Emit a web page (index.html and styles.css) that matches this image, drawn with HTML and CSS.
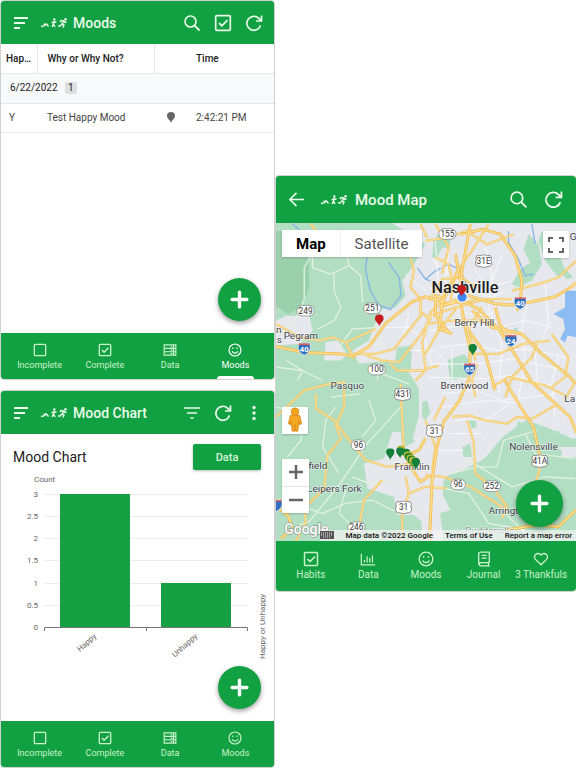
FILE: index.html
```html
<!DOCTYPE html>
<html lang="en">
<head>
<meta charset="utf-8">
<meta name="viewport" content="width=device-width, initial-scale=1">
<title>Moods</title>
<link rel="stylesheet" href="styles.css">
</head>
<body>
<svg class="sprite" aria-hidden="true">
  <symbol id="menu" viewBox="0 0 16 16"><path d="M1 3h14M1 8h11M1 13h6" stroke-width="1.8"/></symbol>
  <symbol id="runners" viewBox="0 0 28 12"><path d="M1 9.500l3-.5 2.500-2 2 2.500M3.500 7.500l3-.5" stroke-width="1.300"/><path d="M14 4l-.5 3-1.500 3M13.500 7l1.500 3M11.500 5.500l5-.5" stroke-width="1.500"/><circle cx="14.300" cy="2.500" r="1.200" fill="currentColor" stroke="none"/><path d="M24 4l-2 3 2 1-1 2.500M22 7l-2 2h-2M20 5l1-1.500 3 .5 1 1.500 1.500-.5" stroke-width="1.400"/><circle cx="25.500" cy="2.300" r="1.200" fill="currentColor" stroke="none"/></symbol>
  <symbol id="search" viewBox="0 0 18 18"><circle cx="7.500" cy="7.500" r="5.500" stroke-width="1.600"/><path d="M11.500 11.500l5 5" stroke-width="1.800"/></symbol>
  <symbol id="check" viewBox="0 0 16 16"><rect x="1.500" y="1.500" width="13" height="13" rx="1" stroke-width="1.500"/><path d="M4.500 8l2.500 2.500 5-5" stroke-width="1.600"/></symbol>
  <symbol id="box" viewBox="0 0 16 16"><rect x="1.500" y="1.500" width="13" height="13" rx="1" stroke-width="1.500"/></symbol>
  <symbol id="refresh" viewBox="0 0 18 18"><path d="M15.500 11.500a7 7 0 1 1-1.700-7.200L16.500 7M16.500 1.500V7H11" stroke-width="1.700"/></symbol>
  <symbol id="filter" viewBox="0 0 18 18"><path d="M1 4h16M4 9h10M7.500 14h3" stroke-width="1.700"/></symbol>
  <symbol id="more" viewBox="0 0 18 18"><g fill="currentColor" stroke="none"><circle cx="9" cy="3.500" r="1.700"/><circle cx="9" cy="9" r="1.700"/><circle cx="9" cy="14.500" r="1.700"/></g></symbol>
  <symbol id="back" viewBox="0 0 18 18"><path d="M17 9H2M9 2L2 9l7 7" stroke-width="1.700"/></symbol>
  <symbol id="server" viewBox="0 0 18 16"><path d="M1.500 1.500h15v13h-15zM1.500 6h15M1.500 10.300h15M9.500 3.800H12M9.500 8.200H12M9.500 12.500H12M13.500 2v12" stroke-width="1.500"/></symbol>
  <symbol id="smile" viewBox="0 0 18 18"><circle cx="9" cy="9" r="7.700" stroke-width="1.500"/><path d="M5.300 10.500c1 3.300 6.400 3.300 7.400 0M6.300 5.700v2M11.700 5.700v2" stroke-width="1.500"/></symbol>
  <symbol id="bars" viewBox="0 0 18 16"><path d="M1.500 2v12.500H17M5 12V9M8 12V5M11 12V7M14 12V4" stroke-width="1.400"/></symbol>
  <symbol id="book" viewBox="0 0 16 18"><path d="M14 13H4a2 2 0 0 0 0 3.800h10.500M2 15V3.200A2 2 0 0 1 4 1.200h10V13M13 13v3.500M5.500 5h5.500M5.500 8h5.500" stroke-width="1.500"/></symbol>
  <symbol id="heart" viewBox="0 0 18 16"><path d="M9 14.500L3 8.700C-1 4.500 5-1 9 3.500 13-1 19 4.500 15 8.700z" stroke-width="1.500"/></symbol>
  <symbol id="plus" viewBox="0 0 18 18"><path d="M9 2v14M2 9h14" stroke-width="3.200" stroke-linecap="round"/></symbol>
  <symbol id="pin" viewBox="0 0 24 33"><path d="M12 33C10 24 0 20 0 11a12 11 0 0 1 24 0c0 9-10 13-12 22z" fill="currentColor" stroke="none"/></symbol>
  <symbol id="interstate" viewBox="0 0 40 42"><path d="M5 3Q12 7 20 3q8 4 15 0 5 9 3 18-4 14-18 19Q6 35 2 21 0 12 5 3z" fill="#2f6fbd" stroke="#fff" stroke-width="2"/><path d="M5 3Q12 7 20 3q8 4 15 0l2 6H3z" fill="#dd5b5b" stroke="none"/></symbol>
  <symbol id="shield" viewBox="0 0 54 42"><path d="M8 3q6 3 11 0 8-2 16 0 5 3 11 0l5 8q-5 5 0 12 2 12-9 14-9 1-15 3-6-2-15-3Q1 35 3 23q5-7 0-12z" fill="#fff" stroke="#777" stroke-width="2.500"/></symbol>
</svg>

<main class="board">
  <div class="column">
    <section class="panel" aria-label="Moods">
      <header class="bar">
        <button class="icon-btn lead" aria-label="Menu"><svg><use href="#menu"/></svg></button>
        <svg class="runners"><use href="#runners"/></svg>
        <h1>Moods</h1>
        <button class="icon-btn" aria-label="Search"><svg><use href="#search"/></svg></button>
        <button class="icon-btn" aria-label="Select"><svg><use href="#check"/></svg></button>
        <button class="icon-btn" aria-label="Refresh"><svg><use href="#refresh"/></svg></button>
      </header>
      <div class="list">
        <table>
          <colgroup><col class="c1"><col class="c2"><col class="c3"><col></colgroup>
          <thead><tr><th class="tight">Hap…</th><th>Why or Why Not?</th><th></th><th class="time">Time</th></tr></thead>
          <tbody>
            <tr class="group"><td colspan="4">6/22/2022 <span class="count">1</span></td></tr>
            <tr><td class="yes">Y</td><td>Test Happy Mood</td><td class="place"><svg><use href="#pin"/></svg></td><td class="time">2:42:21 PM</td></tr>
          </tbody>
        </table>
        <button class="fab" aria-label="Add"><svg><use href="#plus"/></svg></button>
      </div>
      <nav class="tabs">
        <a href="#"><svg><use href="#box"/></svg>Incomplete</a>
        <a href="#"><svg><use href="#check"/></svg>Complete</a>
        <a href="#"><svg><use href="#server"/></svg>Data</a>
        <a href="#" class="active"><svg><use href="#smile"/></svg>Moods</a>
      </nav>
    </section>

    <section class="panel" aria-label="Mood Chart">
      <header class="bar">
        <button class="icon-btn lead" aria-label="Menu"><svg><use href="#menu"/></svg></button>
        <svg class="runners"><use href="#runners"/></svg>
        <h1>Mood Chart</h1>
        <button class="icon-btn" aria-label="Filter"><svg><use href="#filter"/></svg></button>
        <button class="icon-btn" aria-label="Refresh"><svg><use href="#refresh"/></svg></button>
        <button class="icon-btn" aria-label="More"><svg><use href="#more"/></svg></button>
      </header>
      <div class="chart-body">
        <div class="chart-head"><h2>Mood Chart</h2><button class="data-btn">Data</button></div>
        <svg class="chart" viewBox="1 470 273 195" role="img" aria-label="Count by Happy or Unhappy">
          <path class="grid" d="M44 494.500h204M44 516.500h204M44 538.500h204M44 560.500h204M44 583.500h204M44 605.500h204"/>
          <path class="column-bar" d="M60 494h70v133H60zM161 583h70v44h-70z"/>
          <path class="axis" d="M44.500 631v-3.500h203v3.500M146.500 627.500v3.500"/>
          <text x="34" y="482">Count</text>
          <g class="ticks"><text x="38" y="497">3</text><text x="38" y="519">2.5</text><text x="38" y="541">2</text><text x="38" y="563">1.5</text><text x="38" y="586">1</text><text x="38" y="608">0.5</text><text x="38" y="630">0</text>
          <text transform="translate(97 637) rotate(-42)">Happy</text><text transform="translate(198 637) rotate(-42)">Unhappy</text></g>
          <text class="side" transform="translate(265 659) rotate(-90)">Happy or Unhappy</text>
        </svg>
        <button class="fab" aria-label="Add"><svg><use href="#plus"/></svg></button>
      </div>
      <nav class="tabs">
        <a href="#"><svg><use href="#box"/></svg>Incomplete</a>
        <a href="#"><svg><use href="#check"/></svg>Complete</a>
        <a href="#"><svg><use href="#server"/></svg>Data</a>
        <a href="#"><svg><use href="#smile"/></svg>Moods</a>
      </nav>
    </section>
  </div>

  <section class="panel map-panel" aria-label="Mood Map">
    <header class="bar tall">
      <button class="icon-btn lead" aria-label="Back"><svg><use href="#back"/></svg></button>
      <svg class="runners"><use href="#runners"/></svg>
      <h1>Mood Map</h1>
      <button class="icon-btn" aria-label="Search"><svg><use href="#search"/></svg></button>
      <button class="icon-btn" aria-label="Refresh"><svg><use href="#refresh"/></svg></button>
    </header>
    <div class="map">
      <svg class="canvas" viewBox="0 6 903 957" role="img" aria-label="Map of Nashville and Franklin">
        <path d="M0 0h903v970H0z" fill="#b2dec4"/>
        <path d="M0 30h60l40 60 0 110-25 60-40 20-35-25z" fill="#9bd0ad"/>
        <g fill="#e7e8ed">
          <path d="M340 0L450 70l-40 70-30 40 10 45-30 35-40 5-20 40-20 55-50 30 20 40 90-10 60 35 30 50 0 80-18 70 30 40 0 45-20 20v60l50-10 40-40 120-60 50-60 70-50 60 20 80 35h41V0z"/>
          <path d="M0 300l30-15 70 0 10 45-40 40-70 5zM150 365l35-5 30 40-20 20h-50zM265 730l60-15 25-80 25 0 5 50 45-25 60 25 20 85-5 90-15 30-30-10-10 30-30-25-50 0-10-55-80-25zM455 600l65 10 15 130-50 70 20 155h-50z"/>
          <path d="M435 780l50 10 40 80-30 10-20 85h-35zM820 680h83v30l-83 5z"/>
          <path d="M440 560l270 0 0 50-90 110-80 40-100 10z"/>
        </g>
        <g fill="#b2dec4">
          <path d="M500 20l30 20-10 40-20 0-15 30-15 0 5-50zM760 40l30 30 10 60-30 50-40 20-20-10 25-45 30-20-20-40zM800 30l50 60 20 60-20 20-40-50-20-60zM850 120l45 50-20 5-25-30z"/>
          <path d="M515 420l50-20 20 20-10 50-50 10zM365 380l45-5-5 75-50-15zM440 545l15-5 10 35-15 25-10-10zM560 680l25-10 5 40-25 0zM580 600l20 0 5 20-15 5zM640 230l15 0v18h-15zM715 324l12-4v10l-12 4z"/>
          <path d="M725 600l60 35 65-3 18 28-20 25-60-5-60-45zM680 665l60-50 60 40 60 35 0 60-180 10z"/>
        </g>
        <g fill="none" stroke="#85b3e5" stroke-width="4">
          <path d="M274 110l-5 35 15 65 25 42 35 15 32-42-5-55-32-45M50 9l70 60M450 175l30-25 40-20 30 15 20 35 0 35M700 30l0 35 30 50 20 50 25-5M425 140l25 35 15 5M770 9l10 60"/>
        </g>
        <path d="M870 210l33 0v140l-25-5-8 20-15-10 15-30-5-30-30-15 35-20z" fill="#8dbcf2"/>
        <g fill="none" stroke="#e2f2df" stroke-width="4" stroke-linejoin="round">
          <path d="M110 40l10 40-35 60 0 95-25 60-45 40M110 70v70l55 20 55-25 35 30 5 80M175 160l0 50 20 50-20 40-50 25M220 135l-10-60-40-45M310 320l-80 5-40 55M310 320l5 50-10 110M140 480l-60-30-80-10M0 560l40 10 40 40-5 50-40 50M380 555l-110 120-80 120-90 110-30 10M400 490l-80-30 0-50M280 540l20 60-40 50M180 560l-30 40-10 80 50 80M50 850l90 30 70-30 80-10 60 30 80-5M230 770l50 20 80-10M210 810l-20 70 40 40M525 760l80-20 60 0 20-80 100-30M480 800l100 20 60 90 110 20M690 880l60 60M580 720l130 80 100-30 90 5M750 640l30 60 120 15M30 420l50 30-15 30M165 530l90-10"/>
        </g>
        <g fill="none" stroke="#f8f9fb" stroke-width="3">
          <path d="M310 320l90 0 50 40 20 80M400 390l80 0 50 50M460 200l60 30 60-20 70 20 40-20M480 240l100 40 70 0 20-50M460 330l120-20 90 10 80-20 80 20M490 380l90-10 90 20 90-5 130 30M470 430l140 0 100-15 140 30M460 470l160 5 90-10 120 30M500 520l100-10 80 30 160-20M500 560l140-20 100 10M540 600l100-5 70-50M530 380v110M630 80l20 80-10 100 40 110-10 150M680 100l-30 80 10 60M760 230l-20 90 10 100-20 110M810 190l10 120-40 90 10 110M850 400l-20 90 10 100M480 60l10 160M520 80l-10 110M600 150l40 50 70-20M470 120l80 60M390 160l60 50M400 280l-20 90M520 640l100 0M490 690l75 0"/>
        </g>
        <defs>
          <path id="minor" d="M105 9l15 20M0 310l70 40 60 10 40-10 40 15 90-40M210 365l25 50M405 110l10 40-10 50 30 35v50l-80 100-55 15-80 0M430 270l35 25-35 55-60 75-50-5-75-25M345 430l20 20 85 0-30 30M0 590l85-80 75-20 45-5 0 75-25 55 15 40-40 50-10 100-60 60 5 40-25 50-20 30M120 520l0 45 55 35 45 60 50 60 65 20 75-10M375 490l5 110 5 95M320 780l-55 60-15 80-35 25M390 770l10 50-20 60 0 80M400 820l50-20M450 60l65-10 60-20 60 40 80-30M460 240l40-65 60-5 40 30M480 110l40 20 10 50-20 50-45 45-25 90 10 80 40-10M480 9l40 70-20 80M640 9l-50 80-50 70-15 80M450 400l40-70 55-70 60-30M450 290l90-30 90-25 80 0M450 310l80-10 100 0 80 55M590 400l80 0 75-30 80-10M600 530l-10-50 15-50M650 500l50-30 110 25 70 35M790 360l-20 50-60 60-20 60M830 340l50 70-10 60-40 30M710 210l80-20 60-20 53-50M530 590l50-5 50 15 65 10 30-20 45 5 70-40M575 600l20 65 5 95 55 45 40 55-15 35M795 740l-15 55 25 40M450 765l55 5 80 30 110 70M450 800l65 5M475 600l35-70M900 485l-30 50M455 50l-20-40M620 260l-40 60 20 100M450 600l30 80-10 70"/>
          <path id="major" d="M0 378l85 18 115 4 30 8 50-30 50-70 80-65 40-15 70 20 55-25 80 25 55 5 60-10 70-15 50-30 13-13M585 9l-10 55-15 85-5 90 15 85 15 65-5 90-30 65-45 60-20 75-15 100-10 230M560 240l50 25 60 60 45 70 55 90 50 45 65 60 30 70M590 270l60 50 90 20 60 60 85 70 18 20M555 40l70-15 50 15 45 65 20 75-5 70-10 20M660 260l15 55 30 25M580 330l50 70 30 110M690 480l10 20 40 65 35 55 20 90M540 100l15 80M545 165l-35 40-15 60M385 710l45-20 20-35M395 725l40 60 30-20M0 860l35 25 15 40-35 30M690 930l100-15 60 5 53-50M560 240l-60 15-10 70 40 15M500 230l-20-5 0 60 40 50"/>
        </defs>
        <use href="#minor" class="minor-road"/><use href="#minor" class="minor-road core"/>
        <use href="#major" class="main-road"/><use href="#major" class="main-road core"/>
        <g class="city"><text x="0" y="336">n</text><text x="2" y="366">s</text><text x="23" y="355">Pegram</text><text x="164" y="506">Pasquo</text><text x="537" y="316">Berry Hill</text><text x="495" y="505">Brentwood</text><text x="702" y="689">Nolensville</text><text x="640" y="882">Arrington</text><text x="98" y="747">field</text><text x="94" y="817">Leipers Fork</text><text x="357" y="751">Franklin</text><text x="868" y="545">La</text><text x="884" y="57">G</text><text x="570" y="942" class="dim">Rudderville</text></g>
        <text class="capital" x="468" y="217">Nashville</text>
        <g class="route">
          <rect x="63" y="254" width="52" height="32" rx="16"/><rect x="264" y="247" width="52" height="32" rx="16"/><rect x="277" y="431" width="52" height="32" rx="16"/><rect x="490" y="23" width="52" height="32" rx="16"/><rect x="226" y="659" width="44" height="32" rx="16"/><rect x="216" y="906" width="52" height="32" rx="16"/><rect x="526" y="777" width="44" height="32" rx="16"/><rect x="624" y="782" width="52" height="32" rx="16"/>
          <use href="#shield" x="598" y="100" width="54" height="42"/><use href="#shield" x="354" y="501" width="54" height="42"/><use href="#shield" x="357" y="841" width="54" height="42"/><use href="#shield" x="450" y="611" width="54" height="42"/><use href="#shield" x="766" y="702" width="56" height="42"/>
          <text x="89" y="279">249</text><text x="290" y="272">251</text><text x="303" y="456">100</text><text x="516" y="48">155</text><text x="248" y="684">96</text><text x="242" y="931">246</text><text x="548" y="802">96</text><text x="650" y="807">252</text><text x="625" y="130">31E</text><text x="381" y="531">431</text><text x="384" y="871">31</text><text x="477" y="641">31</text><text x="794" y="732">41A</text>
        </g>
        <g class="highway">
          <use href="#interstate" x="65" y="364" width="40" height="42"/><use href="#interstate" x="715" y="226" width="40" height="42"/><use href="#interstate" x="687" y="339" width="40" height="42"/><use href="#interstate" x="563" y="425" width="40" height="42"/><use href="#interstate" x="-20" y="835" width="40" height="42"/>
          <text x="85" y="395">40</text><text x="735" y="257">40</text><text x="707" y="370">24</text><text x="583" y="456">65</text>
        </g>
        <circle cx="560" cy="229" r="17" fill="#fff"/><circle cx="560" cy="229" r="14" fill="#4285f4"/>
        <g color="#c51b1b"><use href="#pin" x="545" y="192" width="28" height="36"/><use href="#pin" x="297" y="281" width="28" height="36"/></g>
        <g color="#158039"><use href="#pin" x="579" y="370" width="26" height="35"/><use href="#pin" x="331" y="684" width="26" height="35"/></g>
        <g color="#b9b936"><use href="#pin" x="364" y="675" width="25" height="33"/><use href="#pin" x="389" y="694" width="25" height="33"/></g>
        <g color="#158039"><use href="#pin" x="361" y="681" width="25" height="33"/><use href="#pin" x="379" y="685" width="25" height="33"/></g>
        <g color="#b9b936"><use href="#pin" x="384" y="693" width="25" height="33"/></g><use href="#pin" x="387" y="698" width="25" height="33" color="#158039"/><use href="#pin" x="392" y="702" width="25" height="33" color="#b9b936"/><use href="#pin" x="396" y="706" width="25" height="33" color="#158039"/><use href="#pin" x="400" y="709" width="25" height="33" color="#b9b936"/>
        <use href="#pin" x="407" y="712" width="27" height="36" color="#158039"/>
        <text class="brand" x="25" y="942">Google</text>
      </svg>
      <div class="map-type"><button class="selected">Map</button><button>Satellite</button></div>
      <button class="control fullscreen" aria-label="Fullscreen"><svg viewBox="0 0 18 18"><path d="M2 6V2h4M12 2h4v4M16 12v4h-4M6 16H2v-4"/></svg></button>
      <button class="control pegman" aria-label="Street View"><svg viewBox="0 0 18 28"><g fill="#f5a623" stroke="#d98a13"><path d="M4 9h10l2 9-2 1-1-4-1 11H9.500L9 19l-.5 7H6L5 15l-1 4-2-1z"/><circle cx="9" cy="5" r="4"/></g></svg></button>
      <div class="zoom"><button aria-label="Zoom in"><svg viewBox="0 0 18 18"><path d="M9 2v14M2 9h14"/></svg></button><button aria-label="Zoom out"><svg viewBox="0 0 18 18"><path d="M2 9h14"/></svg></button></div>
      <div class="legal"><svg class="keyboard" viewBox="0 0 14 8"><path d="M0 0h14v8H0z" fill="#555" stroke="none"/><path d="M1 2h12M1 4h12M3 6h8" stroke="#eee" stroke-dasharray="1 1"/></svg><span>Map data ©2022 Google</span><a href="#">Terms of Use</a><a href="#">Report a map error</a></div>
      <button class="fab" aria-label="Add"><svg><use href="#plus"/></svg></button>
    </div>
    <nav class="tabs tall">
      <a href="#"><svg><use href="#check"/></svg>Habits</a>
      <a href="#"><svg><use href="#bars"/></svg>Data</a>
      <a href="#"><svg><use href="#smile"/></svg>Moods</a>
      <a href="#"><svg><use href="#book"/></svg>Journal</a>
      <a href="#"><svg><use href="#heart"/></svg>3 Thankfuls</a>
    </nav>
  </section>
</main>
</body>
</html>
```
FILE: styles.css
```css
* { box-sizing: border-box; }
body { margin: 0; background: #fff; color: #222; font-family: Roboto, "Liberation Sans", sans-serif; }
button { border: 0; padding: 0; background: none; color: inherit; font: inherit; }
a { color: inherit; text-decoration: none; }
h1, h2 { margin: 0; font-weight: 400; }
svg { display: block; fill: none; stroke: currentColor; }
.sprite { position: absolute; width: 0; height: 0; }

.board { display: grid; grid-template-columns: 275fr 301fr; align-items: start; }
.column { display: grid; gap: 10px; }
.panel { border: 1px solid #d0d0d0; border-radius: 4px; overflow: hidden; }
.map-panel { margin-top: 175px; border-right: 0; }

.bar { display: flex; align-items: center; height: 43px; padding: 0 5px 0 4px; background: #12a142; color: #e9faea; }
.bar h1 { flex: 1; padding-left: 5px; font-size: 14px; font-weight: 500; }
.icon-btn { display: grid; place-items: center; width: 31px; height: 31px; }
.icon-btn svg { width: 18px; height: 18px; }
.icon-btn.lead svg { width: 16px; height: 16px; }
.runners { width: 28px; height: 12px; margin-left: 4px; }
.bar.tall { height: 47px; padding: 0 5px; }
.bar.tall h1 { padding-left: 7px; font-size: 15px; }
.bar.tall .icon-btn { width: 35px; }
.bar.tall .icon-btn svg { width: 19px; height: 19px; }
.bar.tall .lead { width: 31px; }
.bar.tall .lead svg { width: 17px; height: 17px; }
.bar.tall .runners { margin-left: 8px; }

.list { position: relative; min-height: 289px; }
table { width: 100%; border-collapse: collapse; table-layout: fixed; font-size: 10px; }
.c1 { width: 36px; }
.c2 { width: 117px; }
.c3 { width: 33px; }
th, td { height: 29px; padding: 0 10px; border-bottom: 1px solid #e6e6e8; text-align: left; color: #444; white-space: nowrap; }
th { color: #222; font-weight: 500; border-right: 1px solid #e8e8e8; }
th:nth-child(n+3) { border-right: 0; }
th.tight { padding: 0 5px; }
.time { padding: 0 9px; }
.yes { padding: 0 8px; }
.group td { height: 30px; padding: 0 9px; background: #f8f9fb; color: #222; }
.count { display: inline-block; margin-left: 5px; padding: 0 3px; border-radius: 2px; background: #dddfe1; line-height: 12px; }
.place { padding: 0 13px; color: #666; }
.place svg { width: 8px; height: 11px; }

.fab { position: absolute; right: 13px; bottom: 12px; display: grid; place-items: center; width: 43px; height: 43px; border-radius: 50%; background: #12a142; color: #fff; box-shadow: 0 2px 5px #0006; }
.fab svg { width: 19px; height: 19px; }

.tabs { display: flex; height: 46px; padding: 0 6px; background: #12a142; color: #c9f2cb; font-size: 9px; }
.tabs a { position: relative; flex: 1; display: flex; flex-direction: column; align-items: center; gap: 2px; padding-top: 10px; line-height: 12px; white-space: nowrap; }
.tabs svg { width: 14px; height: 14px; }
.tabs .active { color: #fff; }
.tabs .active::after { content: ""; position: absolute; bottom: 0; width: 37px; height: 3px; border-radius: 3px 3px 0 0; background: #fff; }
.tabs.tall { height: 50px; font-size: 10px; }
.tabs.tall svg { width: 16px; height: 16px; }

.chart-body { position: relative; padding-bottom: 56px; }
.chart-head { display: flex; align-items: center; justify-content: space-between; padding: 10px 13px 0 12px; }
.chart-head h2 { font-size: 14px; }
.data-btn { width: 68px; height: 26px; border-radius: 2px; background: #12a142; color: #d9f7dc; font-size: 11px; font-weight: 500; box-shadow: 0 1px 3px #0004; }
.chart { width: 100%; stroke: none; fill: #666; font-size: 8px; }
.grid { stroke: #ececec; }
.column-bar { fill: #15a043; }
.axis { fill: none; stroke: #777; }
.ticks { text-anchor: end; }

.map { position: relative; }
.canvas { width: 100%; height: auto; stroke: none; }
.minor-road { fill: none; stroke: #f3c766; stroke-width: 7; stroke-linejoin: round; }
.main-road { fill: none; stroke: #f2bb50; stroke-width: 9; stroke-linejoin: round; }
.minor-road.core { stroke: #fbe3a2; stroke-width: 3; }
.main-road.core { stroke: #fde295; stroke-width: 4; }
.city text { fill: #3c4048; stroke: #fff9; stroke-width: 4px; paint-order: stroke; font-size: 30px; }
.city .dim { fill: #8b958f; }
.canvas .capital { fill: #202124; stroke: #fff9; stroke-width: 4px; paint-order: stroke; font-size: 49px; font-weight: 500; }
.route rect { fill: #fff; stroke: #777; stroke-width: 2px; }
.route text { fill: #333; font-size: 25px; text-anchor: middle; }
.highway text { fill: #fff; font-size: 23px; font-weight: 700; text-anchor: middle; }
.canvas .brand { fill: #fff; stroke: #8a9a90; stroke-width: 4px; paint-order: stroke; font-size: 42px; font-weight: 500; }
.map-type { position: absolute; top: 7px; left: 6px; display: flex; height: 27px; background: #fff; box-shadow: 0 1px 2px #0003; color: #555; font-size: 15px; }
.map-type button { padding: 0 14px; }
.map-type .selected { border-right: 1px solid #eee; color: #000; font-weight: 700; }
.control, .zoom { position: absolute; background: #fff; box-shadow: 0 1px 2px #0003; color: #666; }
.control { display: grid; place-items: center; width: 26px; height: 27px; }
.control svg { width: 18px; height: 18px; stroke-width: 2; }
.fullscreen { top: 8px; right: 7px; }
.pegman { left: 6px; bottom: 107px; }
.pegman svg { width: 18px; height: 26px; stroke-width: 1; }
.zoom { left: 6px; bottom: 28px; width: 27px; }
.zoom button { display: grid; place-items: center; width: 100%; height: 27px; }
.zoom button + button { border-top: 1px solid #e6e6e6; }
.zoom svg { width: 18px; height: 18px; stroke-width: 2.5; }
.legal { position: absolute; right: 0; bottom: 0; display: flex; align-items: center; gap: 12px; padding-right: 4px; background: #f5f5f5b3; color: #111; font-size: 8px; font-weight: 500; line-height: 11px; white-space: nowrap; }
.keyboard { width: 14px; height: 8px; }
.map .fab { right: 13px; bottom: 14px; width: 47px; height: 47px; }
```
